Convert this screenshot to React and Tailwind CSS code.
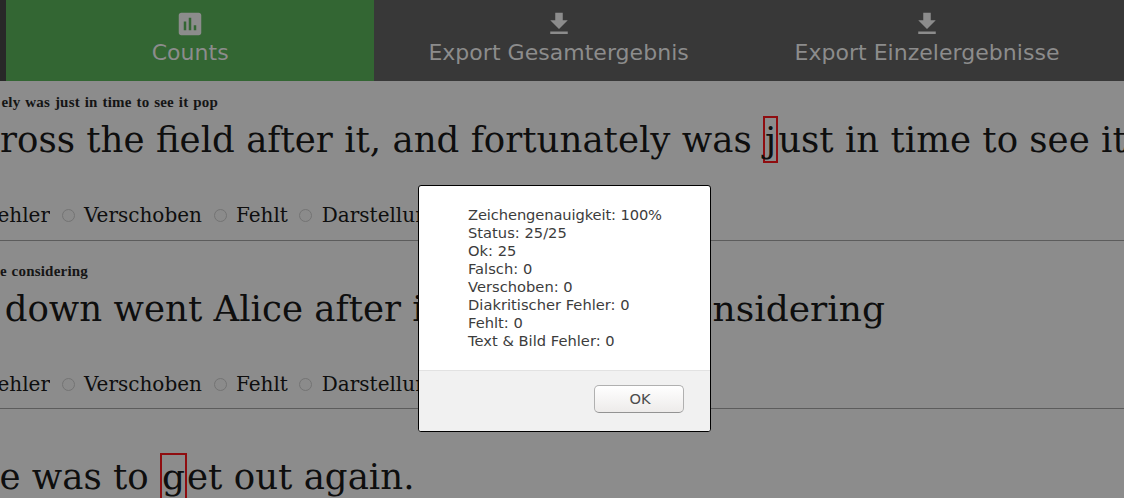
import { MdAssessment, MdFileDownload } from "react-icons/md";

function Tab({ icon: Icon, label, active }) {
  return (
    <button
      className={`flex w-[368.4px] shrink-0 flex-col items-center pt-[9px] font-['DejaVu_Sans',sans-serif] text-[22px] leading-[26px] text-[#8c8c8c] ${
        active ? "bg-[#336633]" : "bg-[#383838]"
      }`}
    >
      <Icon size={30} />
      <span className="pt-px whitespace-nowrap tracking-[0.03px]">{label}</span>
    </button>
  );
}

function Scan({ children, width }) {
  return (
    <div
      className={`flex h-5 justify-end overflow-hidden whitespace-pre font-['Liberation_Serif',serif] text-[15px] leading-[18px] font-bold tracking-[0.2px] [word-spacing:0.9px] text-[#151515] ${width}`}
    >
      {children}
    </div>
  );
}

function Line({ before, width, mark, after }) {
  return (
    <div className="flex h-[47px] items-start overflow-hidden whitespace-pre text-[35.6px] leading-[42px]">
      <span className={`flex shrink-0 justify-end overflow-hidden pt-[3px] pb-px ${width}`}>{before}</span>
      {mark && (
        <span className="h-[47px] shrink-0 border-2 border-[#8f0d10] pt-px text-[36px]">{mark}</span>
      )}
      {after && <span className="pt-[3px] pb-px">{after}</span>}
    </div>
  );
}

function Options() {
  return (
    <div className="flex h-6 items-center overflow-hidden whitespace-nowrap text-[20px] leading-6">
      <span className="flex w-[50px] shrink-0 justify-end overflow-hidden">Fehler</span>
      {["Verschoben", "Fehlt", "Darstellung"].map((name) => (
        <label key={name} className="flex shrink-0 items-center pl-[11.6px]">
          <span className="mr-[9.4px] size-[13px] rounded-full border border-[#747474] bg-[#8b8b8b]" />
          {name}
        </label>
      ))}
    </div>
  );
}

function Dialog() {
  const counts = [
    "Status: 25/25",
    "Ok: 25",
    "Falsch: 0",
    "Verschoben: 0",
    "Diakritischer Fehler: 0",
    "Fehlt: 0",
    "Text & Bild Fehler: 0",
  ];
  return (
    <div className="absolute top-[185px] left-[418px] flex h-[247px] w-[293px] flex-col rounded-[3px] border border-black bg-white font-['DejaVu_Sans',sans-serif] text-[14.67px] text-[#3c3c3c]">
      <div className="flex-1 pt-5 pl-[49px] leading-[18px] whitespace-nowrap">
        <p className="tracking-[-0.1px]">Zeichengenauigkeit: 100%</p>
        {counts.map((line) => (
          <p key={line} className="tracking-[0.02px]">
            {line}
          </p>
        ))}
      </div>
      <div className="flex h-[61px] items-start justify-end rounded-b-[2px] border-t border-[#e2e2e2] bg-[#f1f1f1] pt-[14px] pr-[26px]">
        <button className="h-7 w-[90px] rounded-[5px] border border-[#b0b0b0] border-b-[#939393] bg-linear-to-b from-white to-[#edebea] pl-[2px] leading-[26px] text-[#4c4c4c]">
          OK
        </button>
      </div>
    </div>
  );
}

export default function App() {
  return (
    <div className="relative h-[498px] w-[1124px] overflow-hidden bg-[#8c8c8c] font-['DejaVu_Serif',serif] text-[#0e0e0e]">
      <header className="flex h-[81px] bg-[#383838]">
        <div className="w-[6px] shrink-0 bg-[#282828]" />
        <Tab icon={MdAssessment} label="Counts" active />
        <Tab icon={MdFileDownload} label="Export Gesamtergebnis" />
        <Tab icon={MdFileDownload} label="Export Einzelergebnisse" />
      </header>
      <section className="h-40 border-b border-[#5c5c5c] pt-3">
        <Scan width="w-[218px]">ely was just in time to see it pop</Scan>
        <div className="pt-[3px] pb-10">
          <Line
            width="w-[763px]"
            before="across the field after it, and fortunately was "
            mark="j"
            after="ust in time to see it pop"
          />
        </div>
        <Options />
      </section>
      <section className="h-[168px] border-b border-[#5c5c5c] pt-[21px]">
        <Scan width="w-[88px]">e considering</Scan>
        <div className="pt-[3px] pb-10">
          <Line
            width="w-[885px]"
            before={
              <>
                <span>down went Alice after it, never once </span>
                <span className="text-[36px]">considering</span>
              </>
            }
          />
        </div>
        <Options />
      </section>
      <section className="pt-11">
        <Line width="w-[160px]" before="she was to " mark="g" after="et out again." />
      </section>
      <Dialog />
    </div>
  );
}
